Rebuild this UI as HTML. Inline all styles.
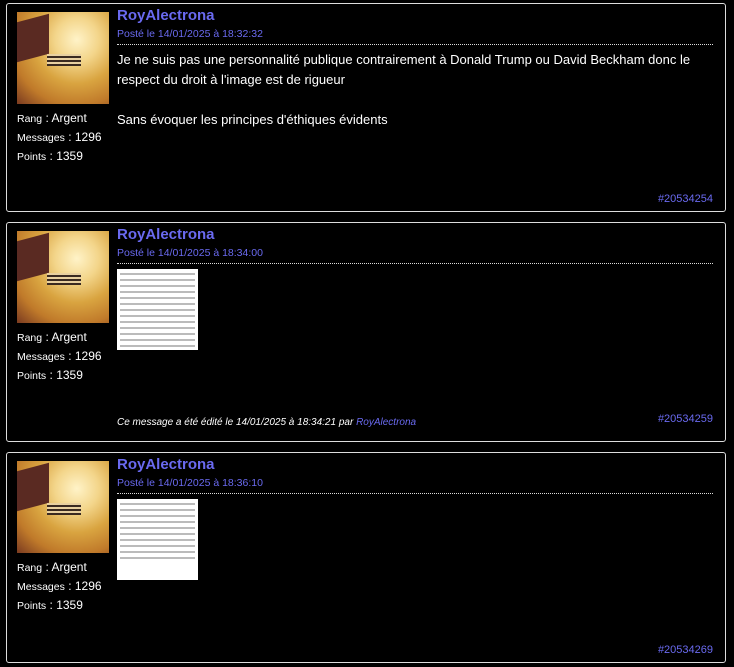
<!DOCTYPE html>
<html><head><meta charset="utf-8"><style>
body{margin:0;background:#000;width:734px;height:667px;overflow:hidden;font-family:"Liberation Sans",sans-serif;color:#fff;position:relative}
.p{position:absolute;left:6px;width:718px;border:1px solid #ddd;border-radius:3px}
.av{position:absolute;left:10px;top:8px;width:92px;height:92px;background:radial-gradient(circle at 65% 30%,#fff3c8 0,#f3d58a 25%,#d9a440 50%,#c07a2a 75%,#7a3a20 100%)}
.av::before{content:"";position:absolute;left:0;top:6px;width:32px;height:40px;background:#5a2a22;transform:skewY(-15deg)}
.av::after{content:"";position:absolute;left:30px;top:42px;width:34px;height:12px;background:repeating-linear-gradient(0deg,#3a2a20 0 2px,#e8d0a0 2px 4px)}
.st{position:absolute;left:10px;top:105px;font-size:12px;line-height:18px}
.st small{font-size:10.5px}
.nm{position:absolute;left:110px;top:3px;font-size:15px;font-weight:bold;color:#6a6af0}
.dt{position:absolute;left:110px;top:24px;font-size:10.5px;color:#6a6af0}
.hr{position:absolute;left:110px;right:12px;top:40px;border-top:1px dotted #ddd}
.tx{position:absolute;left:110px;top:46px;font-size:13px;line-height:20px;right:20px}
.id{position:absolute;right:12px;bottom:6px;font-size:11px;color:#6a6af0}
.th{position:absolute;left:110px;top:46px;width:81px;height:81px;background:#fff}
.th i{display:block;height:2px;background:#bbb;margin:4px 3px}
.ed{position:absolute;left:110px;bottom:13px;font-size:10px;font-style:italic}
</style></head><body>
<div class="p" style="top:3px;height:207px">
<div class="av"></div>
<div class="st"><small>Rang</small> : Argent<br><small>Messages</small> : 1296<br><small>Points</small> : 1359</div>
<div class="nm">RoyAlectrona</div><div class="dt">Posté le 14/01/2025 à 18:32:32</div><div class="hr"></div>
<div class="tx">Je ne suis pas une personnalité publique contrairement à Donald Trump ou David Beckham donc le respect du droit à l'image est de rigueur<br><br>Sans évoquer les principes d'éthiques évidents</div>
<div class="id">#20534254</div></div>
<div class="p" style="top:222px;height:218px">
<div class="av"></div>
<div class="st"><small>Rang</small> : Argent<br><small>Messages</small> : 1296<br><small>Points</small> : 1359</div>
<div class="nm">RoyAlectrona</div><div class="dt">Posté le 14/01/2025 à 18:34:00</div><div class="hr"></div>
<div class="th"><i></i><i></i><i></i><i></i><i></i><i></i><i></i><i></i><i></i><i></i><i></i><i></i><i></i></div>
<div class="ed">Ce message a été édité le 14/01/2025 à 18:34:21 par <span style="color:#6a6af0">RoyAlectrona</span></div>
<div class="id" style="bottom:16px">#20534259</div></div>
<div class="p" style="top:452px;height:209px">
<div class="av"></div>
<div class="st"><small>Rang</small> : Argent<br><small>Messages</small> : 1296<br><small>Points</small> : 1359</div>
<div class="nm">RoyAlectrona</div><div class="dt">Posté le 14/01/2025 à 18:36:10</div><div class="hr"></div>
<div class="th"><i></i><i></i><i></i><i></i><i></i><i></i><i></i><i></i><i></i><i></i></div>
<div class="id">#20534269</div></div>
</body></html>
